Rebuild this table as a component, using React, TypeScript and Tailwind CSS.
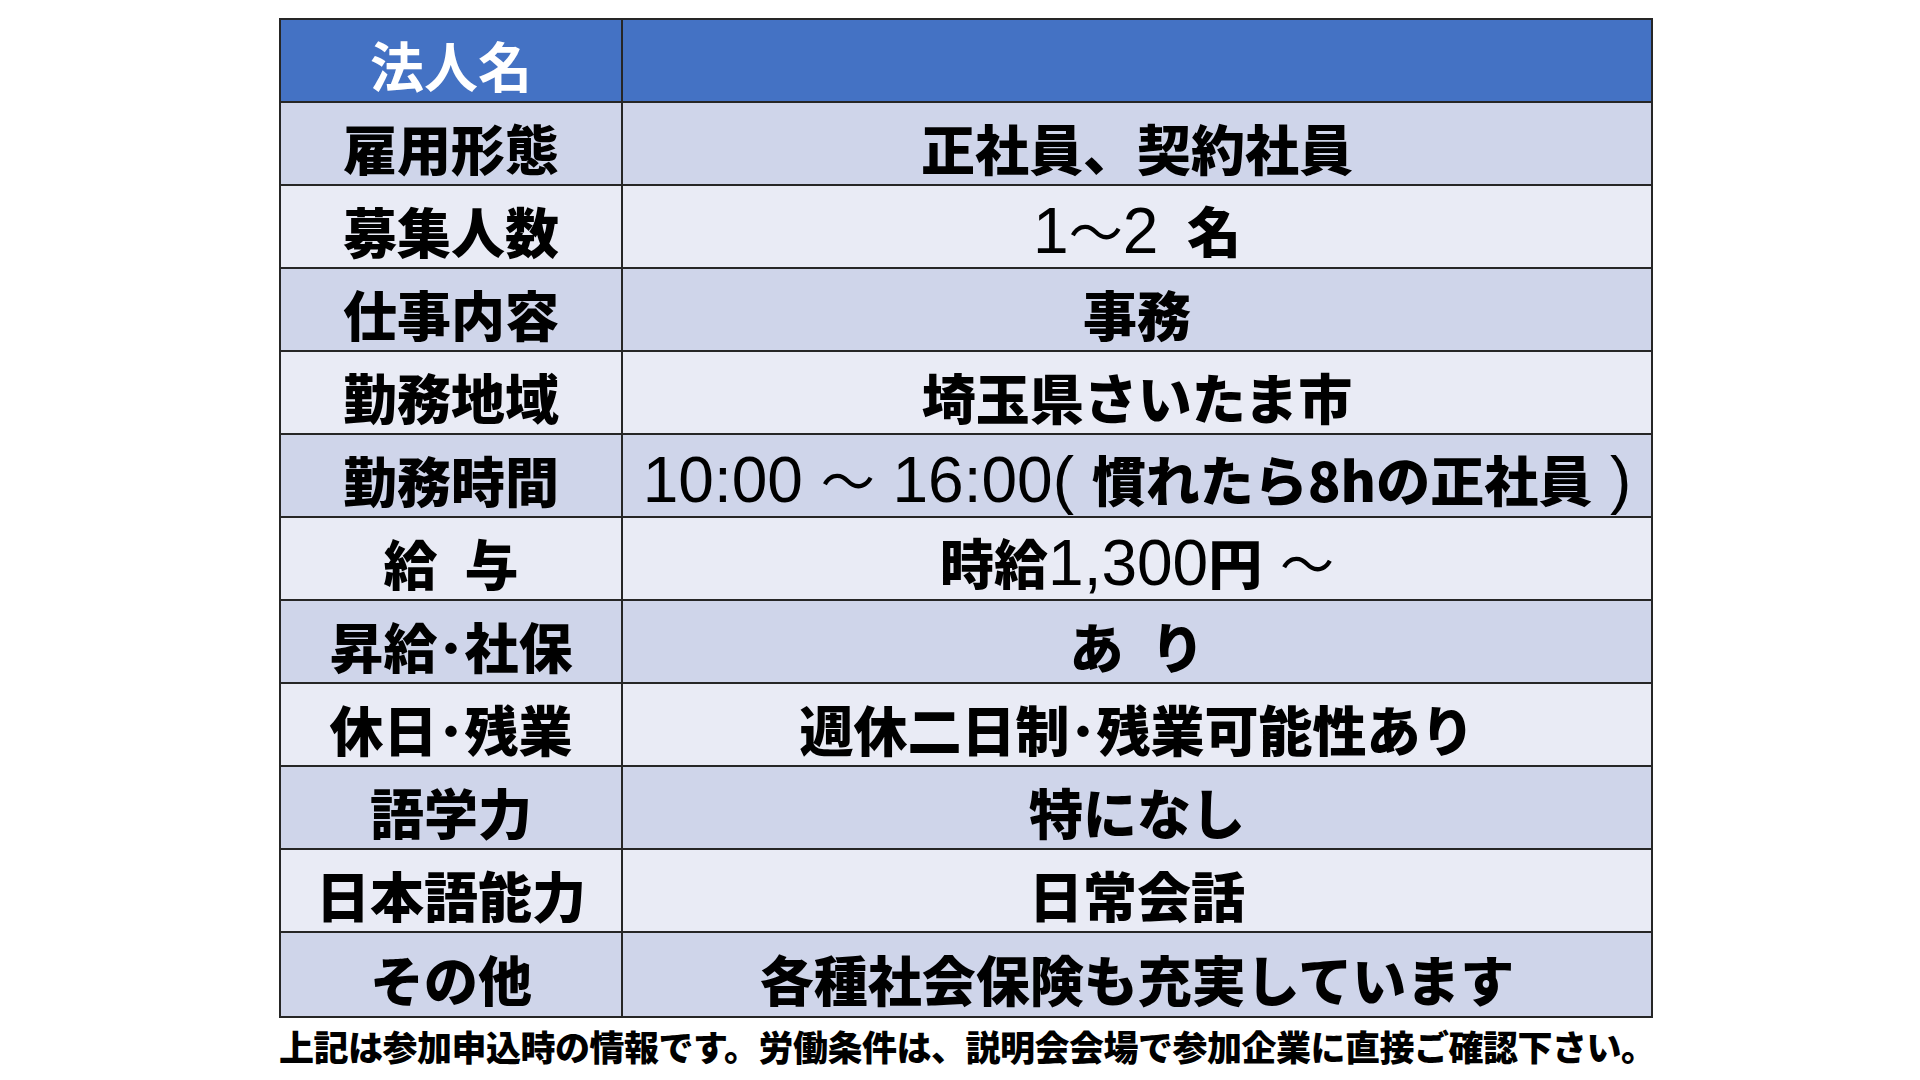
import React from 'react';

type Seg = { t: string; k: 'j' | 'l' | 'w' };

// j: heavy japanese, l: latin regular, w: thin wave dash
const segClass: Record<Seg['k'], string> = {
  j: "font-['Noto_Sans_CJK_JP',sans-serif] font-black text-[54px]",
  l: "font-['Liberation_Sans','Noto_Sans_CJK_JP',sans-serif] font-normal text-[64px]",
  w: "font-['Noto_Sans_CJK_JP',sans-serif] font-normal text-[54px]",
};

const j = (t: string): Seg => ({ t, k: 'j' });
const l = (t: string): Seg => ({ t, k: 'l' });
const w = (t: string): Seg => ({ t, k: 'w' });

const rows: { label: string; value: Seg[] }[] = [
  { label: '雇用形態', value: [j('正社員、契約社員')] },
  { label: '募集人数', value: [l('1'), w('～'), l('2 '), j('\u2009名')] },
  { label: '仕事内容', value: [j('事務')] },
  { label: '勤務地域', value: [j('埼玉県さいたま市')] },
  {
    label: '勤務時間',
    value: [l('10:00 '), w('～'), l(' 16:00( '), j('慣れたら8hの正社員'), l(' )')],
  },
  { label: '給\u2002与', value: [j('時給'), l('1,300'), j('円'), l(' '), w('～')] },
  { label: '昇給･社保', value: [j('あ\u2002り')] },
  { label: '休日･残業', value: [j('週休二日制･残業可能性あり')] },
  { label: '語学力', value: [j('特になし')] },
  { label: '日本語能力', value: [j('日常会話')] },
  { label: 'その他', value: [j('各種社会保険も充実しています')] },
];

const Segs: React.FC<{ segs: Seg[] }> = ({ segs }) => (
  <span className="leading-none whitespace-pre pt-[8px] text-black">
    {segs.map((s, i) => (
      <span key={i} className={segClass[s.k]}>
        {s.t}
      </span>
    ))}
  </span>
);

export default function App() {
  return (
    <div className="w-[1920px] h-[1080px] bg-white overflow-hidden pt-[18px]">
      <div className="ml-[279px] w-[1374px] border-2 border-[#262626]">
        <div className="grid grid-cols-[342px_1fr] h-[83px] border-b-2 border-[#262626] bg-[#4472C4]">
          <div className="flex items-center justify-center border-r-2 border-[#262626]">
            <span className="pt-[8px] leading-none font-['Noto_Sans_CJK_JP',sans-serif] font-bold text-[54px] text-white">
              法人名
            </span>
          </div>
          <div />
        </div>
        {rows.map((r, i) => (
          <div
            key={r.label}
            className={
              'grid grid-cols-[342px_1fr] h-[83px] border-[#262626] ' +
              (i % 2 === 0 ? 'bg-[#CFD5EA] ' : 'bg-[#E9EBF5] ') +
              (i < rows.length - 1 ? 'border-b-2' : '')
            }
          >
            <div className="flex items-center justify-center border-r-2 border-[#262626]">
              <Segs segs={[j(r.label)]} />
            </div>
            <div className="flex items-center justify-center">
              <Segs segs={r.value} />
            </div>
          </div>
        ))}
      </div>
      <p className="ml-[279px] mt-[10px] leading-none font-['Noto_Sans_CJK_JP',sans-serif] font-black text-[35px] tracking-[-0.5px] text-black whitespace-nowrap">
        上記は参加申込時の情報です。労働条件は、説明会会場で参加企業に直接ご確認下さい。
      </p>
    </div>
  );
}
